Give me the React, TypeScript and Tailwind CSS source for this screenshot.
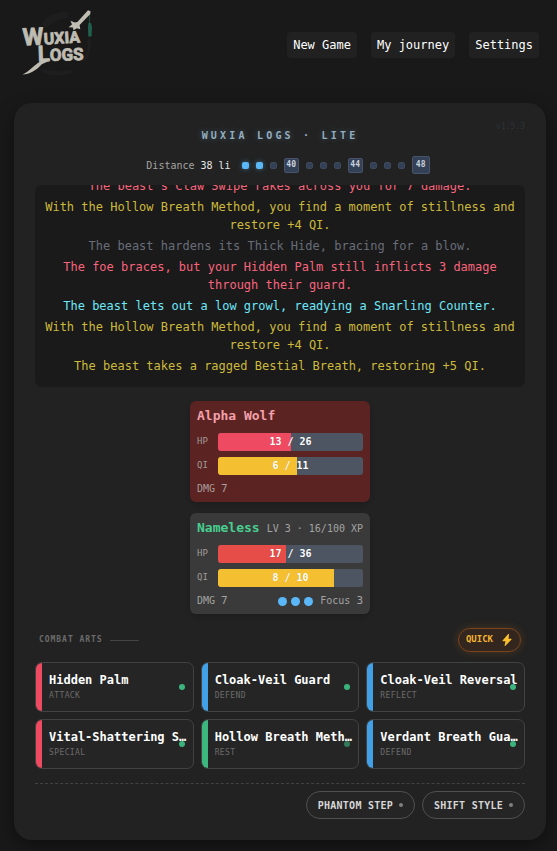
import { clsx } from "clsx";

type Tone = "hit" | "qi" | "muted" | "warn";

const toneClass: Record<Tone, string> = {
  hit: "text-[#f8647c]",
  qi: "text-[#cdb93c]",
  muted: "text-[#686d79]",
  warn: "text-[#6ee7f9]"
};

const logEntries: { id: number; tone: Tone; text: string }[] = [
  { id: 1, tone: "hit", text: "The beast's Claw Swipe rakes across you for 7 damage." },
  {
    id: 2,
    tone: "qi",
    text: "With the Hollow Breath Method, you find a moment of stillness and restore +4 QI."
  },
  { id: 3, tone: "muted", text: "The beast hardens its Thick Hide, bracing for a blow." },
  {
    id: 4,
    tone: "hit",
    text: "The foe braces, but your Hidden Palm still inflicts 3 damage through their guard."
  },
  { id: 5, tone: "warn", text: "The beast lets out a low growl, readying a Snarling Counter." },
  {
    id: 6,
    tone: "qi",
    text: "With the Hollow Breath Method, you find a moment of stillness and restore +4 QI."
  },
  { id: 7, tone: "qi", text: "The beast takes a ragged Bestial Breath, restoring +5 QI." }
];

const arts = [
  { name: "Hidden Palm", kind: "Attack", bar: "bg-[#ee4b62]", dim: false },
  { name: "Cloak-Veil Guard", kind: "Defend", bar: "bg-[#42a0e6]", dim: false },
  { name: "Cloak-Veil Reversal", kind: "Reflect", bar: "bg-[#42a0e6]", dim: false },
  { name: "Vital-Shattering Strike", kind: "Special", bar: "bg-[#ee4b62]", dim: false },
  { name: "Hollow Breath Method", kind: "Rest", bar: "bg-[#3cb87f]", dim: true },
  { name: "Verdant Breath Guard", kind: "Defend", bar: "bg-[#42a0e6]", dim: false }
];

const Logo = () => (
  <svg width="76" height="72" viewBox="20 6 76 72" role="img" aria-label="Wuxia Logs">
    <g fill="none" stroke="#1e1e1e" strokeLinecap="round">
      <path d="M46 24C51 18 57 16 65 15" strokeWidth="7" />
      <path d="M89 40C90 48 88 55 84 60" strokeWidth="3" />
      <path d="M44 71C53 74 62 74 70 72" strokeWidth="4" />
    </g>
    <path d="M89.500 12V24" stroke="#1f4a3c" strokeWidth="1" />
    <path d="M88.500 23h2.500l1 4-.5 9.500h-3.200l-.3-9.500z" fill="#20604c" />
    <g fill="#bfbcb2">
      <path d="M88 10.300l2.500 1-.2 2.700L79.600 25l.7 4.200-3.400-1-3.400 2-.6-2.600-4.400-.4 3.500-2.700-1.500-3.800 4.200 1.800 2.700-.6z" />
      <path d="M50.500 59C46 60 42 61 39 62.200C34.500 65 29 71.500 22.500 74.500C30 74.500 36.500 70 41.500 64.500C43.500 62.800 48 62.500 50.500 59z" />
    </g>
    <g
      fill="#bfbcb2"
      stroke="#bfbcb2"
      strokeWidth="0.800"
      strokeLinejoin="round"
      fontFamily="Roboto, sans-serif"
      fontWeight="700"
    >
      <text x="23" y="45.500" fontSize="24" transform="rotate(-3 23 45)">
        W<tspan fontSize="16">UXIA</tspan>
      </text>
      <text x="38" y="61.500" fontSize="22" transform="rotate(-2 38 61)">
        L<tspan fontSize="17">OGS</tspan>
      </text>
    </g>
  </svg>
);

const Meter = ({
  label,
  value,
  max,
  fill
}: {
  label: string;
  value: number;
  max: number;
  fill: string;
}) => (
  <div className="flex items-center">
    <span className="w-[21px] text-[9px] text-[#a09a9a]">{label}</span>
    <div
      className="relative h-[18px] flex-1 overflow-hidden rounded-[3px] bg-[#4d5562]"
      role="meter"
      aria-label={label}
      aria-valuemin={0}
      aria-valuemax={max}
      aria-valuenow={value}
    >
      <div className={clsx("h-full", fill)} style={{ width: `${(value / max) * 100}%` }} />
      <span className="absolute inset-0 text-center text-[10px] leading-[18px] font-bold text-white [text-shadow:0_0_1px_rgba(0,0,0,0.2)]">
        {value} / {max}
      </span>
    </div>
  </div>
);

const Milestone = ({ value, last }: { value: number; last?: boolean }) => (
  <span
    className={clsx(
      "flex items-center justify-center rounded-[2px] border border-[#46536a] bg-[#334056] text-[8px] font-bold text-[#cbd3de]",
      last ? "size-[18px]" : "size-[15px]"
    )}
  >
    {value}
  </span>
);

const Step = ({ done }: { done?: boolean }) => (
  <span
    className={clsx(
      "size-[7px] rounded-[2px]",
      done ? "bg-[#5ab8f8] shadow-[0_0_5px_rgba(90,184,248,0.5)]" : "border border-[#3d485b] bg-[#334056]"
    )}
  />
);

export default function App() {
  return (
    <div className="min-h-screen bg-[#191919] pr-[11px] pb-[11px] pl-3.5 font-['DejaVu_Sans_Mono','Liberation_Mono',monospace] text-gray-200">
      <header className="flex h-[103px] items-start justify-between pt-1.5 pr-[7px] pl-1.5">
        <a href="#home">
          <Logo />
        </a>
        <nav className="mt-[26px] flex gap-3.5 text-xs text-white">
          {["New Game", "My journey", "Settings"].map((item) => (
            <button key={item} type="button" className="h-[26px] rounded bg-[#212121] px-1.5">
              {item}
            </button>
          ))}
        </nav>
      </header>

      <main className="relative rounded-[18px] bg-[#222222] px-[21px] pt-[25px] pb-[21px] shadow-[0_6px_18px_rgba(0,0,0,0.4)]">
        <span className="absolute top-4 right-[21px] text-[8px] leading-4 text-[#2c3439]">
          v1.5.3
        </span>
        <h1 className="text-center text-[10px] leading-4 font-bold tracking-[0.32em] text-[#93aec0] uppercase [text-shadow:0_0_6px_rgba(120,170,200,0.4)]">
          Wuxia Logs · Lite
        </h1>

        <div className="mt-[11px] flex h-5 items-center justify-center gap-[7px] pl-4">
          <p className="mr-1 text-[10px] text-[#a3a3a3]">
            Distance <span className="text-[#e5e5e5]">38 li</span>
          </p>
          <Step done />
          <Step done />
          <Step />
          <Milestone value={40} />
          <Step />
          <Step />
          <Step />
          <Milestone value={44} />
          <Step />
          <Step />
          <Step />
          <Milestone value={48} last />
        </div>

        <section
          aria-label="Combat log"
          className="mt-2.5 flex h-[202px] flex-col justify-end gap-[3px] overflow-hidden rounded-[7px] bg-[#1a1a1a] px-2 pb-3 text-center text-xs leading-[18px]"
        >
          {logEntries.map((entry) => (
            <p key={entry.id} className={clsx("shrink-0", toneClass[entry.tone])}>
              {entry.text}
            </p>
          ))}
        </section>

        <div className="mt-3.5 flex flex-col items-center gap-[11px]">
          <section className="w-[180px] rounded-md bg-[#5b2322] px-[7px] py-[5px] shadow-md">
            <h2 className="text-[13px] leading-5 font-bold text-[#f3a0aa]">Alpha Wolf</h2>
            <div className="mt-[7px] space-y-1.5">
              <Meter label="HP" value={13} max={26} fill="bg-[#ee4b62]" />
              <Meter label="QI" value={6} max={11} fill="bg-[#f4c032]" />
            </div>
            <p className="mt-1.5 text-[10px] leading-4 text-[#a89c9c]">
              DMG <span className="text-[11px]">7</span>
            </p>
          </section>

          <section className="w-[180px] rounded-md bg-[#3a3a3a] px-[7px] py-[5px] shadow-md">
            <div className="flex items-center justify-between whitespace-nowrap">
              <h2 className="text-[13px] leading-5 font-bold text-[#48cf90]">Nameless</h2>
              <span className="text-[10px] text-[#a3a3a3]">LV 3 · 16/100 XP</span>
            </div>
            <div className="mt-[7px] space-y-1.5">
              <Meter label="HP" value={17} max={36} fill="bg-[#e64c48]" />
              <Meter label="QI" value={8} max={10} fill="bg-[#f4c032]" />
            </div>
            <div className="mt-1.5 flex items-center justify-between text-[10px] leading-4 text-[#a3a3a3]">
              <p>
                DMG <span className="text-[11px]">7</span>
              </p>
              <div className="flex items-center gap-1">
                <span className="size-[9px] rounded-full bg-[#5ab8f8]" />
                <span className="size-[9px] rounded-full bg-[#5ab8f8]" />
                <span className="size-[9px] rounded-full bg-[#5ab8f8]" />
                <p className="ml-[3px]">
                  Focus <span className="text-[11px]">3</span>
                </p>
              </div>
            </div>
          </section>
        </div>

        <div className="mt-3.5 flex items-center justify-between px-1">
          <h2 className="flex items-center gap-[7px] text-[8px] font-bold tracking-[0.12em] text-[#6b6b6b] uppercase">
            Combat Arts
            <span className="h-px w-[29px] bg-[#444444]" />
          </h2>
          <button
            type="button"
            className="flex h-6 items-center gap-2 rounded-full border border-[#7a431c] bg-[#33261f] px-[7px] text-[9px] font-bold text-[#f3b42f] shadow-[0_0_8px_rgba(200,120,30,0.25)]"
          >
            QUICK
            <svg width="12" height="12" viewBox="0 0 12 12" fill="#fbc02d" aria-hidden="true">
              <path d="M7.200 0L1.600 6.400c-.3.400-.1.900.3.900h2.600L3.600 11.700c0 .3.400.4.600.2L10.500 5.600c.3-.4.100-.9-.3-.9H7.600L8 .2C8-.1 7.500-.3 7.200 0z" />
            </svg>
          </button>
        </div>

        <div className="mt-2.5 grid grid-cols-3 gap-[7px]">
          {arts.map((art) => (
            <button
              key={art.name}
              type="button"
              className="relative flex h-[50px] min-w-0 overflow-hidden rounded-[7px] border border-[#424242] bg-[#252525] text-left"
            >
              <span className={clsx("w-1.5 shrink-0 self-stretch", art.bar)} />
              <span className="flex min-w-0 flex-1 flex-col self-center pr-1 pl-[7px]">
                <span className="truncate text-xs leading-[18px] font-bold text-white">
                  {art.name}
                </span>
                <span className="text-[8px] leading-[14px] tracking-wider text-[#6b6b6b] uppercase">
                  {art.kind}
                </span>
              </span>
              <span
                className={clsx(
                  "absolute top-1/2 right-2 size-1.5 -translate-y-1/2 rounded-full bg-[#3cb47e]",
                  art.dim && "opacity-60"
                )}
              />
            </button>
          ))}
        </div>

        <div className="mt-3.5 flex justify-end gap-[7px] border-t border-dashed border-[#424242] pt-[7px]">
          {["Phantom Step", "Shift Style"].map((label) => (
            <button
              key={label}
              type="button"
              className="flex h-7 items-center gap-1.5 rounded-full border border-[#505050] bg-[#252525] px-[11px] text-[10px] font-bold tracking-wide text-[#d6d6d6] uppercase"
            >
              {label}
              <span className="size-1 rounded-full bg-[#808080]" />
            </button>
          ))}
        </div>
      </main>
    </div>
  );
}
